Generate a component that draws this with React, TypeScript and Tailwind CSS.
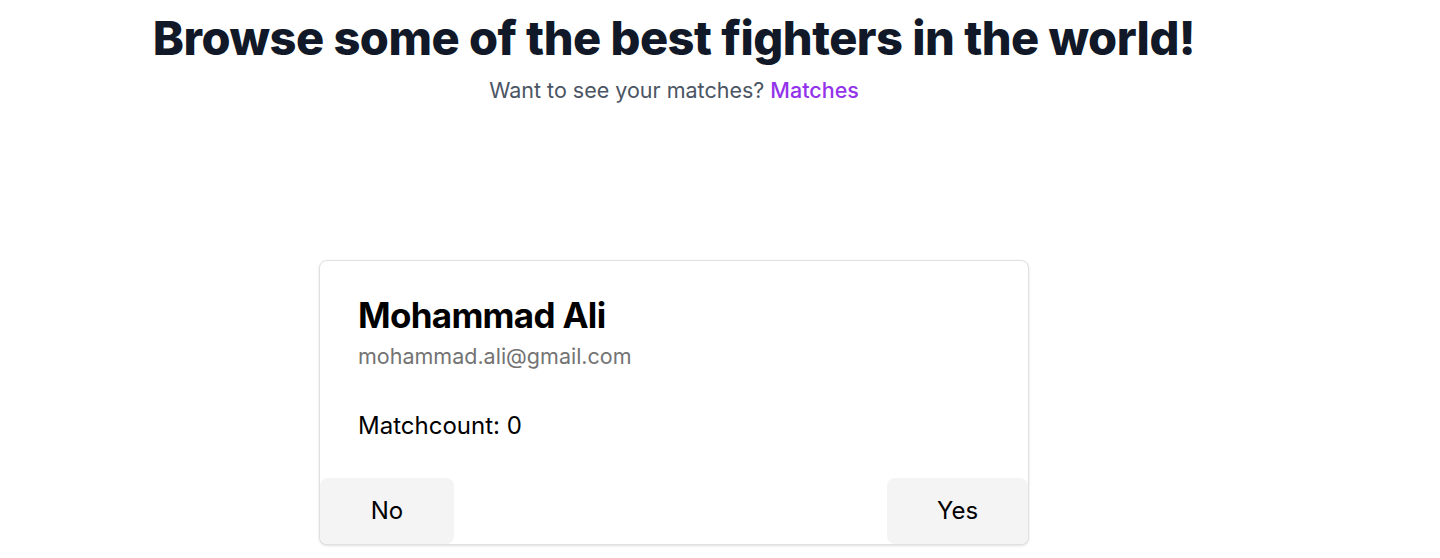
export default function App() {
  return (
    <div className="min-h-[558px] bg-white pr-[92px]" style={{ fontFamily: "Inter, 'Noto Sans', sans-serif" }}>
      <div className="flex flex-col items-center">
        <h1 className="mt-[12px] text-[47px] leading-[52px] font-extrabold tracking-[-0.011em] text-[#111827]">
          Browse some of the best fighters in the world!
        </h1>
        <p className="mt-[12px] text-[21.5px] leading-[28px] text-[#4b5563]">
          Want to see your matches? <a className="font-medium text-[#9333ea]">Matches</a>
        </p>
        <div className="mt-[156px] flex w-[710px] flex-col rounded-lg border border-[#e0e0e0] bg-white shadow-sm">
          <div className="px-[38px] pt-[33px]">
            <h2 className="text-[35px] leading-[42px] font-bold tracking-[-0.02em] text-black">Mohammad Ali</h2>
            <p className="mt-[5px] text-[21.5px] leading-[30px] text-[#737373]">mohammad.ali@gmail.com</p>
            <p className="mt-[39px] text-[24px] leading-[32px] text-black">Matchcount: 0</p>
          </div>
          <div className="mt-[36px] flex justify-between">
            <button className="h-[66px] w-[134px] rounded-lg bg-[#f4f4f4] text-[24px] text-black">No</button>
            <button className="h-[66px] w-[141px] rounded-lg bg-[#f4f4f4] text-[24px] text-black">Yes</button>
          </div>
        </div>
      </div>
    </div>
  );
}
